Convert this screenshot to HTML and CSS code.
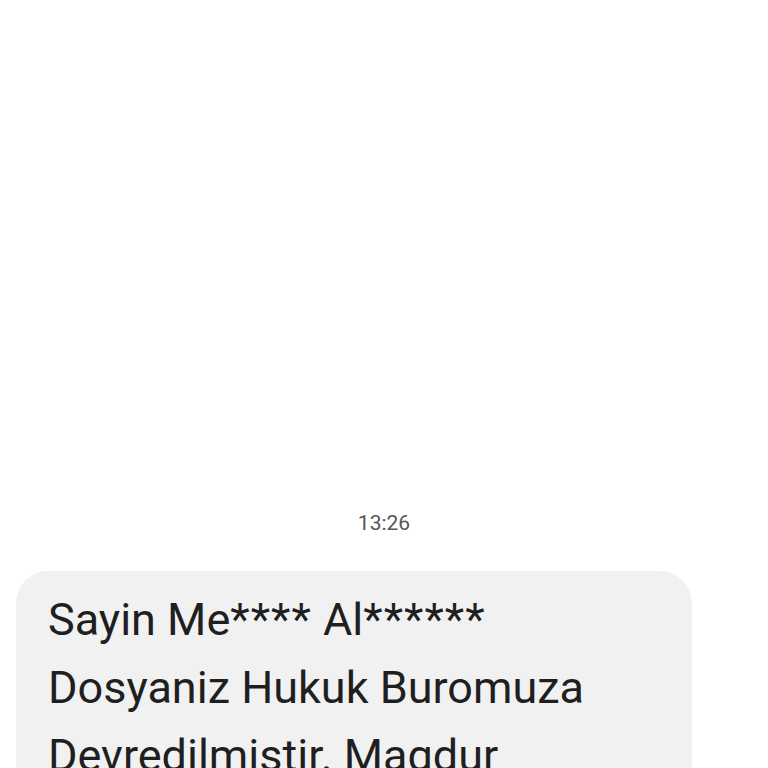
FILE: index.html
```html
<!DOCTYPE html>
<html lang="tr">
<head>
<meta charset="utf-8">
<link rel="stylesheet" href="styles.css">
</head>
<body>
<main class="thread">
  <div class="timestamp">13:26</div>
  <div class="bubble">
    <p class="message">Sayin Me<span class="mask">****</span> Al<span class="mask">******</span><br>Dosyaniz Hukuk Buromuza<br>Devredilmistir. Magdur</p>
  </div>
</main>
</body>
</html>
```
FILE: styles.css
```css
html, body {
  margin: 0;
  padding: 0;
  background: #ffffff;
  height: 768px;
  overflow: hidden;
}
.thread {
  display: flex;
  flex-direction: column;
  padding-top: 510px;
  font-family: Roboto, "Noto Sans", sans-serif;
}
.timestamp {
  text-align: center;
  font-size: 21px;
  line-height: 26px;
  color: #555555;
  height: 26px;
}
.bubble {
  margin-top: 35px;
  margin-left: 16px;
  width: 676px;
  box-sizing: border-box;
  background: #f1f1f1;
  border-radius: 32px;
  padding: 15px 32px 20px;
}
.message {
  margin: 0;
  font-size: 45px;
  line-height: 68px;
  color: #1f1f1f;
}
.mask {
  letter-spacing: 1px;
}
```
